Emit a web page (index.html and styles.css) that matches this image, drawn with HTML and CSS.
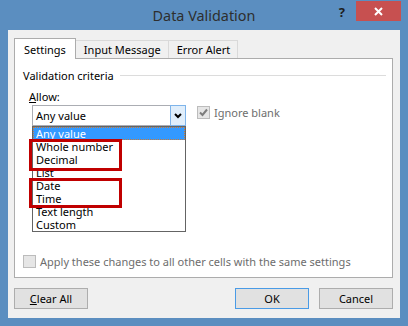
FILE: index.html
```html
<!DOCTYPE html>
<html lang="en">
<head>
    <meta charset="UTF-8">
    <title>Data Validation</title>
    <link rel="stylesheet" href="styles.css">
</head>
<body>

    <div class="window">
        <!-- Title bar -->
        <div class="titlebar">
            <span class="title">Data Validation</span>
            <div class="controls">
                <span class="help">?</span>
                <span class="close">
                    <svg width="9" height="9" viewBox="0 0 9 9"><path d="M1 1 L8 8 M8 1 L1 8" stroke="#fff" stroke-width="2"/></svg>
                </span>
            </div>
        </div>

        <div class="client">
            <!-- Tabs -->
            <div class="tabs">
                <div class="tab active">Settings</div>
                <div class="tab">Input Message</div>
                <div class="tab">Error Alert</div>
            </div>

            <div class="panel">
                <div class="group"><span>Validation criteria</span><span class="rule"></span></div>
                <div class="field-label"><u>A</u>llow:</div>
                <div class="allow-row">
                    <div class="select">
                        <span class="select-value">Any value</span>
                        <span class="select-btn">
                            <svg width="8" height="6" viewBox="0 0 8 6"><path d="M1 1 L4 4 L7 1" fill="none" stroke="#000" stroke-width="2"/></svg>
                        </span>
                        <ul class="options">
                            <li class="selected">Any value</li>
                            <li>Whole number</li>
                            <li>Decimal</li>
                            <li>List</li>
                            <li>Date</li>
                            <li>Time</li>
                            <li>Text length</li>
                            <li>Custom</li>
                        </ul>
                        <div class="mark mark-one"></div>
                        <div class="mark mark-two"></div>
                    </div>
                    <label class="check ignore">
                        <span class="box">
                            <svg width="11" height="11" viewBox="0 0 11 11"><path d="M2 5.5 L4.5 8 L9 2.5" fill="none" stroke="#7d7d7d" stroke-width="2"/></svg>
                        </span>
                        Ignore blank
                    </label>
                </div>
                <label class="check apply"><span class="box"></span>Apply these changes to all other cells with the same settings</label>
            </div>

            <!-- Buttons -->
            <div class="buttons">
                <button class="btn"><u>C</u>lear All</button>
                <span class="spacer"></span>
                <button class="btn default">OK</button>
                <button class="btn">Cancel</button>
            </div>
        </div>
    </div>

</body>
</html>
```

FILE: styles.css
```css
* { box-sizing: border-box; }
body { margin: 0; font-family: "Noto Sans", sans-serif; font-size: 11px; color: #000; }

/* Window frame */
.window { width: 408px; height: 326px; background: #5b8ec0; padding: 0 8px 8px; display: flex; flex-direction: column; }
.titlebar { height: 30px; margin: 0 -8px; display: grid; grid-template-columns: 1fr auto 1fr; }
.title { grid-column: 2; align-self: center; font-size: 14.4px; color: #2e2e2e; }
.controls { grid-column: 3; justify-self: end; display: flex; align-items: flex-start; padding: 1px 7px 0 0; }
.help { font-weight: bold; font-size: 13px; line-height: 13px; color: #1e1e1e; margin: 5px 11px 0 0; }
.close { width: 45px; height: 20px; background: #c75050; display: flex; align-items: center; justify-content: center; }

/* Client area */
.client { flex: 1; background: #f0f0f0; display: flex; flex-direction: column; padding: 8px 7px 9px 6px; }
.tabs { display: flex; align-items: flex-end; height: 20px; }
.tab { height: 18px; padding: 1px 7px 0 8px; border: 1px solid #d9d9d9; border-bottom: none; line-height: 16px; color: #000; }
.tab + .tab { margin-left: -1px; }
.tab.active { height: 21px; padding: 3px 9px 0; background: #fff; border-color: #acacac; margin-bottom: -1px; position: relative; z-index: 1; }

.panel { flex: 1; background: #fff; border: 1px solid #acacac; display: flex; flex-direction: column; }
.group { display: flex; align-items: center; margin: 9px 6px 0 8px; line-height: 15px; }
.rule { flex: 1; height: 1px; background: #dcdcdc; margin-left: 6px; }
.field-label { margin: 6px 0 0 14px; line-height: 15px; }

.allow-row { display: flex; align-items: flex-start; margin: 1px 0 0 17px; }
.select { position: relative; width: 154px; height: 21px; border: 1px solid #abadb3; display: flex; align-items: center; }
.select-value { flex: 1; padding-left: 3px; }
.select-btn { width: 16px; height: 21px; margin: -1px -1px -1px 0; background: #e0eefb; border: 1px solid #7eb4ea; display: flex; align-items: center; justify-content: center; }

.options { position: absolute; top: 20px; left: -1px; width: 154px; margin: 0; padding: 0; list-style: none; background: #fff; border: 1px solid #646464; z-index: 2; }
.options li { height: 13px; line-height: 13px; padding-left: 3px; }
.options li.selected { background: #3399ff; color: #fff; outline: 1px dotted #cc7a33; outline-offset: -1px; }

.mark { position: absolute; left: -4px; width: 93px; border: 3px solid #c00000; z-index: 3; }
.mark-one { top: 33px; height: 32px; }
.mark-two { top: 72px; height: 30px; }

.check { display: flex; align-items: center; color: #6d6d6d; line-height: 15px; }
.box { width: 13px; height: 13px; border: 1px solid #bcbcbc; background: #e6e6e6; display: flex; align-items: center; justify-content: center; margin-right: 4px; }
.ignore { margin: 0 0 0 11px; }
.apply { margin: auto 0 8px 8px; }

/* Buttons */
.buttons { display: flex; margin-top: 10px; gap: 10px; }
.spacer { flex: 1; }
.btn { width: 74px; height: 21px; padding: 0; font: inherit; color: #000; background: #e1e1e1; border: 1px solid #adadad; }
.btn.default { border-color: #4a9be6; }
```
